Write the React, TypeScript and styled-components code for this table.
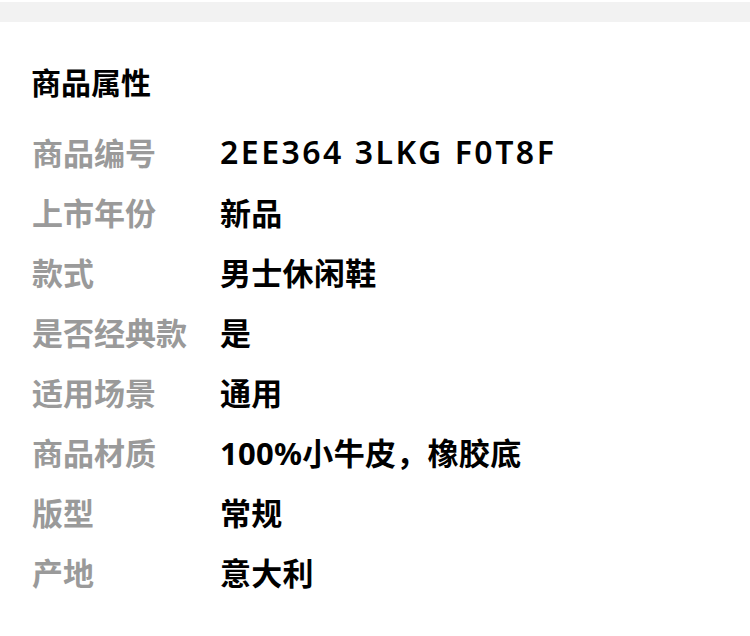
import styled, { createGlobalStyle } from 'styled-components'

const GlobalStyle = createGlobalStyle`
  body {
    margin: 0;
    background: #ffffff;
    font-family: "Noto Sans CJK SC", "Noto Sans", sans-serif;
  }
`

const Page = styled.div`
  width: 750px;
  padding-top: 2px;
`

const TopBand = styled.div`
  height: 20px;
  background: #f2f2f2;
`

const Section = styled.section`
  padding: 29px 32px 0 32px;
`

const Title = styled.h2`
  margin: 0 0 10px -1px;
  height: 60px;
  line-height: 60px;
  font-size: 30px;
  font-weight: 700;
  color: #000000;
`

const AttrList = styled.div`
  display: flex;
  flex-direction: column;
`

const AttrRow = styled.div`
  display: flex;
  align-items: center;
  height: 60px;
`

const Label = styled.div`
  width: 188px;
  flex-shrink: 0;
  font-size: 31px;
  font-weight: 700;
  color: #9a9a9a;
`

const Value = styled.div<{ $code?: boolean }>`
  font-family: "Noto Sans", "Noto Sans CJK SC", sans-serif;
  font-size: ${({ $code }) => ($code ? '32px' : '31px')};
  font-weight: ${({ $code }) => ($code ? 600 : 700)};
  letter-spacing: ${({ $code }) => ($code ? '2.5px' : '0.3px')};
  color: #000000;
`

const attrs: { label: string; value: string; code?: boolean }[] = [
  { label: '商品编号', value: '2EE364 3LKG F0T8F', code: true },
  { label: '上市年份', value: '新品' },
  { label: '款式', value: '男士休闲鞋' },
  { label: '是否经典款', value: '是' },
  { label: '适用场景', value: '通用' },
  { label: '商品材质', value: '100%小牛皮，橡胶底' },
  { label: '版型', value: '常规' },
  { label: '产地', value: '意大利' },
]

export default function App() {
  return (
    <>
      <GlobalStyle />
      <Page>
        <TopBand />
        <Section>
          <Title>商品属性</Title>
          <AttrList>
            {attrs.map((a) => (
              <AttrRow key={a.label}>
                <Label>{a.label}</Label>
                <Value $code={a.code}>{a.value}</Value>
              </AttrRow>
            ))}
          </AttrList>
        </Section>
      </Page>
    </>
  )
}
